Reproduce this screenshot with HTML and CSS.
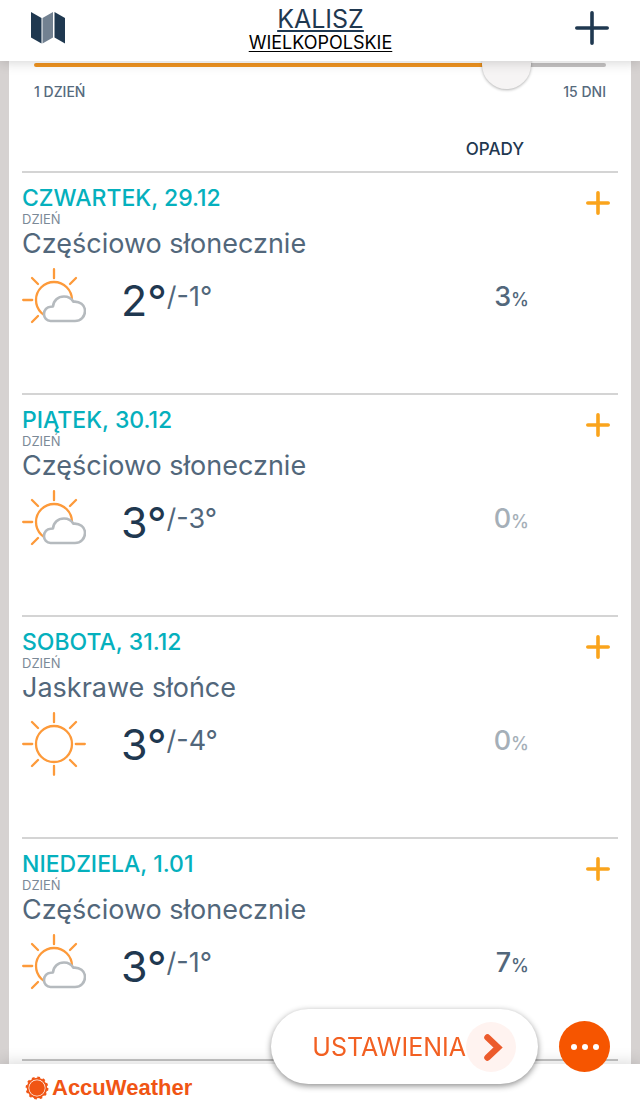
FILE: index.html
```html
<!DOCTYPE html>
<html lang="pl">
<head>
<meta charset="UTF-8">
<meta name="viewport" content="width=device-width, initial-scale=1.0">
<title>Kalisz | AccuWeather</title>
<link rel="stylesheet" href="styles.css">
</head>
<body>
    <svg class="sprite" aria-hidden="true">
        <symbol id="icon-sun" viewBox="0 0 64 64">
            <g fill="none" stroke="#fd9a3a" stroke-width="2.300" stroke-linecap="round">
                <circle cx="32" cy="32" r="18"/>
                <path d="M32 1.200v9M32 53.800v9M1.200 32h9M53.800 32h9M10 10l6 6M54 10l-6 6M10 54l6-6M54 54l-6-6"/>
            </g>
        </symbol>
        <symbol id="icon-cloudy" viewBox="0 0 64 64">
            <g fill="none" stroke="#fd9a3a" stroke-width="2.300" stroke-linecap="round">
                <circle cx="32" cy="32" r="18"/>
                <path d="M32 1.200v9M1.200 32h9M10 10l6 6M54 10l-6 6M10 54l6-6"/>
            </g>
            <path d="M28.500 53a6.800 6.800 0 0 1-6.500-7c0-4 3-7 6.500-7.200l2.500-.3c.5-6 5-10 11-10 4.200 0 7.500 2 9.300 5.200 6.200-.7 11.700 3.300 11.700 9.300 0 5.500-4.300 10-10 10z" fill="#fff" stroke="#b5babe" stroke-width="2.600" stroke-linejoin="round"/>
        </symbol>
        <symbol id="icon-plus" viewBox="0 0 24 24">
            <path d="M12 1.800v20.400M1.800 12h20.400" fill="none" stroke="currentColor" stroke-width="3.600" stroke-linecap="round"/>
        </symbol>
    </svg>

    <header class="topbar">
        <button type="button" class="map-button" aria-label="Mapa">
            <svg width="36" height="34" viewBox="0 0 36 34">
                <path d="M1 1l10.500 6v25.500L1 26.500z" fill="#1f3850"/>
                <path d="M12.500 7L23 1v25.500l-10.500 6z" fill="#728191"/>
                <path d="M24.500 1L35 7v25.500l-10.500-6z" fill="#1f3850"/>
            </svg>
        </button>
        <div class="place">
            <a href="#" class="city">KALISZ</a>
            <a href="#" class="region">WIELKOPOLSKIE</a>
        </div>
        <button type="button" class="new-button" aria-label="Dodaj miejsce">
            <svg width="34" height="34" viewBox="0 0 34 34">
                <path d="M17 1.800v30.400M1.800 17h30.400" stroke="#1f3850" stroke-width="3.600" stroke-linecap="round"/>
            </svg>
        </button>
    </header>

    <main class="content">
        <div class="panel">
            <div class="range">
                <input type="range" id="days" min="1" max="15" value="13" aria-label="Liczba dni">
                <div class="range-labels">
                    <label for="days">1 DZIEŃ</label>
                    <label for="days">15 DNI</label>
                </div>
            </div>
            <div class="column-title">OPADY</div>

            <section class="day">
                <div class="day-head">
                    <div>
                        <h2>CZWARTEK, 29.12</h2>
                        <p class="part">DZIEŃ</p>
                    </div>
                    <button type="button" class="expand" aria-label="Rozwiń"><svg><use href="#icon-plus"/></svg></button>
                </div>
                <p class="condition">Częściowo słonecznie</p>
                <div class="values">
                    <svg class="weather"><use href="#icon-cloudy"/></svg>
                    <span class="high">2°</span><span class="low">/-1°</span>
                    <span class="rain">3<small>%</small></span>
                </div>
            </section>

            <section class="day">
                <div class="day-head">
                    <div>
                        <h2>PIĄTEK, 30.12</h2>
                        <p class="part">DZIEŃ</p>
                    </div>
                    <button type="button" class="expand" aria-label="Rozwiń"><svg><use href="#icon-plus"/></svg></button>
                </div>
                <p class="condition">Częściowo słonecznie</p>
                <div class="values">
                    <svg class="weather"><use href="#icon-cloudy"/></svg>
                    <span class="high">3°</span><span class="low">/-3°</span>
                    <span class="rain none">0<small>%</small></span>
                </div>
            </section>

            <section class="day">
                <div class="day-head">
                    <div>
                        <h2>SOBOTA, 31.12</h2>
                        <p class="part">DZIEŃ</p>
                    </div>
                    <button type="button" class="expand" aria-label="Rozwiń"><svg><use href="#icon-plus"/></svg></button>
                </div>
                <p class="condition">Jaskrawe słońce</p>
                <div class="values">
                    <svg class="weather"><use href="#icon-sun"/></svg>
                    <span class="high">3°</span><span class="low">/-4°</span>
                    <span class="rain none">0<small>%</small></span>
                </div>
            </section>

            <section class="day">
                <div class="day-head">
                    <div>
                        <h2>NIEDZIELA, 1.01</h2>
                        <p class="part">DZIEŃ</p>
                    </div>
                    <button type="button" class="expand" aria-label="Rozwiń"><svg><use href="#icon-plus"/></svg></button>
                </div>
                <p class="condition">Częściowo słonecznie</p>
                <div class="values">
                    <svg class="weather"><use href="#icon-cloudy"/></svg>
                    <span class="high">3°</span><span class="low">/-1°</span>
                    <span class="rain">7<small>%</small></span>
                </div>
            </section>
        </div>
    </main>

    <footer class="bottombar">
        <a href="#" class="brand">
            <svg width="24" height="24" viewBox="0 0 24 24">
                <circle cx="12" cy="12" r="7.800" fill="#f05514"/>
                <circle cx="12" cy="12" r="9.400" fill="none" stroke="#f05514" stroke-width="1.800"/>
                <circle cx="12" cy="12" r="10.400" fill="none" stroke="#f05514" stroke-width="2" stroke-dasharray="2.700 2.745"/>
            </svg>
            <span>AccuWeather</span>
        </a>
    </footer>

    <div class="floating">
        <button type="button" class="settings">
            <span>USTAWIENIA</span>
            <svg width="50" height="50" viewBox="0 0 50 50">
                <circle cx="25" cy="25" r="25" fill="#fff3f0"/>
                <path d="M21.500 15.500l10.500 10L21.500 35.500" fill="none" stroke="#ec5b2c" stroke-width="6.500" stroke-linecap="round" stroke-linejoin="miter"/>
            </svg>
        </button>
        <button type="button" class="more" aria-label="Więcej">
            <svg width="30" height="8" viewBox="0 0 30 8" fill="#fff">
                <circle cx="4" cy="4" r="3"/>
                <circle cx="15" cy="4" r="3"/>
                <circle cx="26" cy="4" r="3"/>
            </svg>
        </button>
    </div>
</body>
</html>
```
FILE: styles.css
```css
* {
    box-sizing: border-box;
}

body {
    margin: 0;
    height: 100vh;
    display: flex;
    flex-direction: column;
    overflow: hidden;
    background-color: #d6d2d1;
    font-family: 'Inter', 'Liberation Sans', sans-serif;
    color: #1f3850;
}

h2,
p {
    margin: 0;
}

button {
    padding: 0;
    border: none;
    background: none;
    cursor: pointer;
}

svg {
    display: block;
}

.sprite {
    position: absolute;
    width: 0;
    height: 0;
}

/* Top bar */
.topbar {
    position: relative;
    z-index: 1;
    flex: none;
    display: flex;
    justify-content: space-between;
    align-items: center;
    height: 61px;
    padding: 0 31px 5px 30px;
    background-color: #fff;
    box-shadow: 0 1px 12px rgba(0, 0, 0, 0.18);
}

.place {
    display: flex;
    flex-direction: column;
    align-items: center;
    padding-top: 4px;
}

.city {
    font-size: 25px;
    line-height: 26px;
    color: #1f3850;
    text-underline-offset: 2px;
}

.region {
    font-size: 18px;
    line-height: 22px;
    color: #000;
    text-underline-offset: 2px;
}

/* Forecast panel */
.content {
    flex: 1;
    min-height: 0;
    overflow: hidden;
}

.panel {
    margin: 0 9px;
    padding: 0 13px 20px;
    background-color: #fff;
}

.range {
    margin-top: -11px;
    padding: 0 12px;
}

.range input {
    -webkit-appearance: none;
    appearance: none;
    display: block;
    width: 100%;
    height: 30px;
    margin: 0;
    background: none;
}

.range input::-webkit-slider-runnable-track {
    height: 4px;
    border-radius: 2px;
    background: linear-gradient(to right, #f09420 85%, #c4c2c2 85%);
}

.range input::-webkit-slider-thumb {
    -webkit-appearance: none;
    width: 49px;
    height: 49px;
    margin-top: -23px;
    border-radius: 50%;
    background-color: #f6f4f4;
    box-shadow: 0 1px 3px rgba(0, 0, 0, 0.3);
}

.range-labels {
    display: flex;
    justify-content: space-between;
    padding-top: 4px;
    font-size: 14px;
    font-weight: 500;
    line-height: 16px;
    color: #566a7d;
}

.column-title {
    padding: 39px 94px 12px 0;
    text-align: right;
    font-size: 17px;
    font-weight: 500;
    line-height: 20px;
}

.day {
    padding: 13px 0 61px;
    border-top: 2px solid #d4d4d4;
}

.day:last-child {
    border-bottom: 2px solid #c4c4c4;
}

.day-head {
    display: flex;
    justify-content: space-between;
}

.day h2 {
    font-size: 23px;
    font-weight: 500;
    line-height: 25px;
    color: #05b0bd;
}

.part {
    font-size: 13px;
    line-height: 16px;
    color: #7b8997;
}

.expand {
    width: 24px;
    height: 24px;
    margin: 5px 8px 0 0;
    color: #faa41c;
}

.expand svg {
    width: 24px;
    height: 24px;
}

.condition {
    font-size: 27px;
    line-height: 34px;
    color: #52677b;
}

.values {
    display: flex;
    align-items: center;
    height: 64px;
    margin-top: 7px;
}

.weather {
    width: 64px;
    height: 64px;
    margin-right: 35px;
}

.high {
    font-size: 43px;
}

.low,
.rain {
    padding-bottom: 8px;
    font-size: 27px;
    color: #52677b;
}

.rain {
    margin: 0 89px 0 auto;
    font-weight: 500;
}

.rain small {
    font-size: 18px;
}

.rain.none {
    color: #a5afb8;
}

/* Bottom bar */
.bottombar {
    position: relative;
    z-index: 1;
    flex: none;
    display: flex;
    align-items: center;
    height: 43px;
    padding: 5px 25px 0;
    background-color: #fff;
    box-shadow: 0 -1px 16px rgba(0, 0, 0, 0.16);
}

.brand {
    display: flex;
    align-items: center;
    gap: 3px;
    font-family: 'Liberation Sans', sans-serif;
    font-size: 22px;
    font-weight: bold;
    color: #f05514;
    text-decoration: none;
}

/* Buttons over the page */
.floating {
    position: fixed;
    right: 30px;
    bottom: 23px;
    z-index: 2;
    display: flex;
    align-items: center;
    gap: 21px;
}

.settings {
    display: flex;
    align-items: center;
    height: 75px;
    padding: 0 22px 0 41px;
    border-radius: 38px;
    background-color: #fff;
    box-shadow: 0 2px 6px rgba(0, 0, 0, 0.45);
    font-family: inherit;
    font-size: 25px;
    color: #f26022;
}

.more {
    display: flex;
    justify-content: center;
    align-items: center;
    width: 51px;
    height: 51px;
    border-radius: 50%;
    background-color: #f65500;
}
```
